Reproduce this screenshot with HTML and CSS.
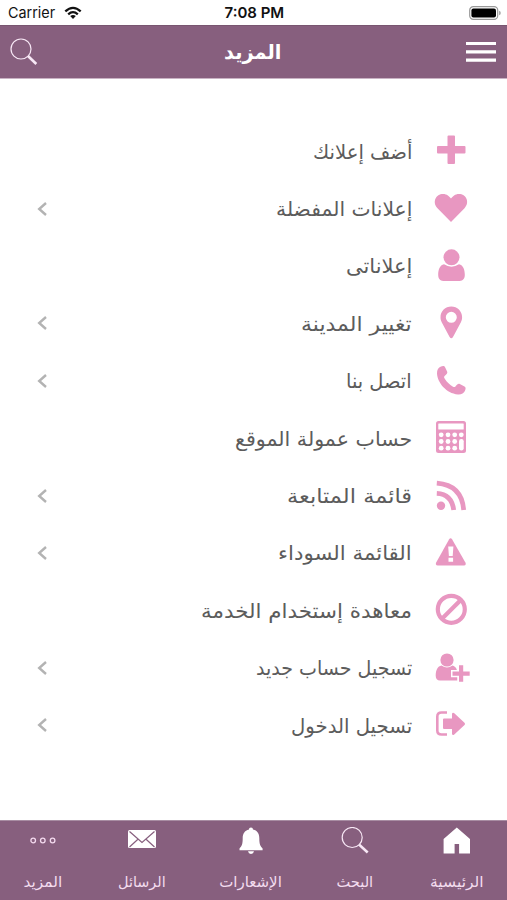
FILE: index.html
```html
<!DOCTYPE html>
<html lang="ar" dir="rtl">
<head>
<meta charset="utf-8">
<title>المزيد</title>
<link rel="stylesheet" href="styles.css">
</head>
<body>
<div class="status" dir="ltr">
  <div class="carrier"><span class="fit" data-w="47">Carrier</span>
    <svg width="18" height="14" viewBox="0 0 18 14"><g fill="none" stroke="#111" stroke-width="2.3"><path d="M1.3 5.3Q9-1.6 16.7 5.3M4.2 8.3Q9 4 13.8 8.3"/></g><path d="M6.2 10.1Q9 7.8 11.8 10.1L9 13z" fill="#111"/></svg>
  </div>
  <div class="time"><span class="fit" data-w="60">7:08 PM</span></div>
  <svg class="battery" width="32" height="14" viewBox="0 0 32 14"><rect x=".7" y=".7" width="28" height="12.6" rx="3.6" fill="#fff" stroke="#999" stroke-width="1.2"/><rect x="2.4" y="2.4" width="24.6" height="9.2" rx="2" fill="#000"/><path d="M30.2 4.8q1.5.5 1.5 2.2t-1.5 2.2z" fill="#999"/></svg>
</div>
<header class="bar" dir="ltr">
  <svg width="28" height="28" viewBox="0 0 28 28" fill="none" stroke="#f8e8f6"><circle cx="11" cy="11" r="10" stroke-width="1.2"/><path d="M18 18l8.300 8" stroke-width="2.600"/></svg>
  <h1><span class="fit" data-w="57">المزيد</span></h1>
  <svg width="30" height="22" viewBox="0 0 30 22"><path d="M0 2.500h30M0 10.800h30M0 19.200h30" stroke="#fff" stroke-width="3.200"/></svg>
</header>
<main class="menu">
  <a class="row"><svg class="icon" viewBox="0 0 36 36"><path d="M15.500 3.500h5.500q1 0 1 1V14h9.500q1 0 1 1v5.500q0 1-1 1H22V31q0 1-1 1h-5.500q-1 0-1-1v-9.500H5q-1 0-1-1V15q0-1 1-1h9.500V4.500q0-1 1-1z"/></svg><span class="label"><span class="fit" data-w="99">أضف إعلانك</span></span></a>
  <a class="row"><svg class="icon" viewBox="0 0 36 36"><path d="M18 32L4.500 18.300C-1.200 12 3 4 10 4c4 0 6.300 2.300 8 4.600C19.700 6.300 22 4 26 4c7 0 11.200 8 5.500 14.300z"/></svg><span class="label"><span class="fit" data-w="136">إعلانات المفضلة</span></span><svg class="go" viewBox="0 0 12 16"><path d="M10 2L3.200 8l6.800 6"/></svg></a>
  <a class="row"><svg class="icon" viewBox="0 0 36 36"><circle cx="18.500" cy="10.300" r="8"/><path d="M11 17.300q7.500 4.700 15 0c4.300 1 5.800 5.500 5.800 10.500 0 4-2 6.200-5 6.200H10.200c-3 0-5-2.200-5-6.200 0-5 1.500-9.500 5.800-10.500z"/></svg><span class="label"><span class="fit" data-w="66">إعلاناتى</span></span></a>
  <a class="row"><svg class="icon" viewBox="0 0 36 36"><path fill-rule="evenodd" d="M18.300 2.500c6 0 10.800 4.700 10.800 10.700 0 2-.5 3.500-1.200 5L20 33q-1.700 2.500-3.400 0L8.700 18.200c-.7-1.500-1.200-3-1.200-5C7.500 7.200 12.300 2.500 18.300 2.500zm0 5.300a5.500 5.500 0 1 0 0 11 5.500 5.500 0 0 0 0-11z"/></svg><span class="label"><span class="fit" data-w="111">تغيير المدينة</span></span><svg class="go" viewBox="0 0 12 16"><path d="M10 2L3.200 8l6.800 6"/></svg></a>
  <a class="row"><svg class="icon" viewBox="0 0 36 36"><path d="M8 4.500c2-.9 3.500-.6 4.200 1l2 4.300c.5 1.500-.5 2.700-2.600 4.200-1 .8-.4 2 .5 3.300 2 3 4.500 5.500 7.500 7.200 1.200.7 2.300 1 3-.2 1.500-2 2.600-3 4.200-2.300l4.700 2.500c1.400.8 1.400 2 .5 4.300-1 2.500-4 4-7 3.700C13 31.300 4.500 20.500 4 11.500 3.900 8 5.300 5.600 8 4.500z"/></svg><span class="label"><span class="fit" data-w="66">اتصل بنا</span></span><svg class="go" viewBox="0 0 12 16"><path d="M10 2L3.200 8l6.800 6"/></svg></a>
  <a class="row"><svg class="icon" viewBox="0 0 36 36"><rect x="3" y="2" width="30" height="32" rx="2.500"/><g class="cut"><rect x="5.300" y="4.500" width="25.400" height="6" rx=".5"/><circle cx="8.200" cy="15.800" r="2.400"/><circle cx="15" cy="15.800" r="2.400"/><circle cx="21.700" cy="15.800" r="2.400"/><circle cx="28.300" cy="15.800" r="2.400"/><circle cx="8.200" cy="22.500" r="2.400"/><circle cx="15" cy="22.500" r="2.400"/><circle cx="21.700" cy="22.500" r="2.400"/><circle cx="8.200" cy="29.200" r="2.400"/><circle cx="15" cy="29.200" r="2.400"/><circle cx="21.700" cy="29.200" r="2.400"/><rect x="26" y="20" width="4.700" height="11.600" rx="2.300"/></g></svg><span class="label"><span class="fit" data-w="177">حساب عمولة الموقع</span></span></a>
  <a class="row"><svg class="icon" viewBox="0 0 36 36"><circle cx="8" cy="28.800" r="4.200"/><path class="line" d="M3.800 16.300Q18.700 17 20.700 33M3.800 6.200Q28.700 8 30.700 33"/></svg><span class="label"><span class="fit" data-w="125">قائمة المتابعة</span></span><svg class="go" viewBox="0 0 12 16"><path d="M10 2L3.200 8l6.800 6"/></svg></a>
  <a class="row"><svg class="icon" viewBox="0 0 36 36"><path d="M16 5.500q1.600-2.500 3.200 0l13.200 23q1.200 2.500-1.400 3H4.700Q2 31 3.200 28.500z"/><path class="cut" d="M15.200 12.500h5.200l-.7 9.500h-3.800zM15.500 23.800h4.600v4h-4.600z"/></svg><span class="label"><span class="fit" data-w="134">القائمة السوداء</span></span><svg class="go" viewBox="0 0 12 16"><path d="M10 2L3.200 8l6.800 6"/></svg></a>
  <a class="row"><svg class="icon" viewBox="0 0 36 36"><path d="M8.700 28L28 8.700" class="ban"/><circle cx="18.300" cy="18.300" r="13.500" class="ban"/></svg><span class="label"><span class="fit" data-w="211">معاهدة إستخدام الخدمة</span></span></a>
  <a class="row"><svg class="icon" viewBox="0 0 36 36"><circle cx="14" cy="11" r="6.600"/><path d="M8.500 16.600q5.500 3.700 11 0c3.500 1 5 4 5 9v6H7c-2.800 0-4.300-2-4.300-4.800 0-5.700 2-9.500 5.800-10.200z"/><path class="plus" d="M26 16.200h4.200v6.400h6.500v4.200h-6.500v5.900H26v-5.900h-6.500v-4.200H26z"/></svg><span class="label"><span class="fit" data-w="156">تسجيل حساب جديد</span></span><svg class="go" viewBox="0 0 12 16"><path d="M10 2L3.200 8l6.800 6"/></svg></a>
  <a class="row"><svg class="icon" viewBox="0 0 36 36"><path class="thin" d="M14 6.500H8.500Q4.300 6.500 4.300 10.500v14q0 4 4.200 4H14"/><path d="M11 12.500h8V8q.3-2 2-1l10.500 9.700q1.200 1.200 0 2.400L21 28.700q-1.700 1-2-1V23h-8q-1 0-1-1v-8.500q0-1 1-1z"/></svg><span class="label"><span class="fit" data-w="121">تسجيل الدخول</span></span><svg class="go" viewBox="0 0 12 16"><path d="M10 2L3.200 8l6.800 6"/></svg></a>
</main>
<nav class="tabs" dir="ltr">
  <a class="tab"><svg width="28" height="28" viewBox="0 0 28 28" fill="none" stroke="#f3d9ee" stroke-width="1.300"><circle cx="4.200" cy="13.500" r="2.300"/><circle cx="13.800" cy="13.500" r="2.300"/><circle cx="23.600" cy="13.500" r="2.300"/></svg><span class="fit mid" data-w="39">المزيد</span></a>
  <a class="tab"><svg width="28" height="28" viewBox="0 0 28 28"><rect y="3" width="28" height="18" rx="1.500" fill="#fff"/><path d="M1.500 4.500L14 15.500 26.500 4.500M1.500 20l8.700-8M26.500 20l-8.700-8" fill="none" stroke="#875f7e" stroke-width="1.200"/></svg><span class="fit mid" data-w="48">الرسائل</span></a>
  <a class="tab"><svg width="28" height="28" viewBox="0 0 28 28" fill="#fff"><path d="M14 .5q2 0 2 2c4.500 1 6.300 4.500 6.300 8.500 0 6.500 1 8 3.300 10.500v1.700H2.500v-1.700C4.800 19 5.700 17.500 5.700 11c0-4 1.800-7.500 6.300-8.500 0-1.300.7-2 2-2zM11 24.300h6q-.5 2.600-3 2.600t-3-2.600z"/></svg><span class="fit mid" data-w="63">الإشعارات</span></a>
  <a class="tab"><svg width="28" height="28" viewBox="0 0 28 28" fill="none" stroke="#f8e8f6"><circle cx="11.200" cy="10.500" r="10" stroke-width="1.200"/><path d="M18 17.500l8.700 8" stroke-width="2.500"/></svg><span class="fit mid" data-w="37">البحث</span></a>
  <a class="tab"><svg width="28" height="28" viewBox="0 0 28 28" fill="#fff"><path d="M13.800.5L27 12v14.500H16.100V17h-4.500v9.500H.6V12z"/></svg><span class="fit mid" data-w="54">الرئيسية</span></a>
</nav>
<script src="fit.js"></script>
</body>
</html>
```
FILE: styles.css
```css
* { box-sizing: border-box; }
body { margin: 0; width: 507px; height: 900px; overflow: hidden; display: flex; flex-direction: column; background: #fff; font-family: "DejaVu Sans", sans-serif; }
svg { display: block; flex: none; }
.fit { display: inline-block; white-space: nowrap; transform-origin: right center; }
.fit.mid { transform-origin: center; }
.status { height: 25px; flex: none; display: grid; grid-template-columns: 1fr auto 1fr; align-items: center; padding: 1px 6px 0 8px; font: 15px/24px Inter, sans-serif; color: #111; }
.status .fit { transform-origin: left center; }
.carrier { display: flex; align-items: center; gap: 7px; }
.time { font-weight: 600; width: 60px; }
.battery { justify-self: end; }
.bar { height: 54px; flex: none; display: flex; align-items: center; justify-content: space-between; padding: 0 11px 0 10px; background: #875f7e; border-top: 1px solid #785570; border-bottom: 1px solid #c9b3c4; color: #fff; }
.bar h1 { margin: 0; font-size: 20px; line-height: 30px; font-weight: 700; }
.menu { flex: 1; padding: 44px 38px 0 36px; }
.row { height: 57.4px; display: flex; align-items: center; color: #5c5c5c; font-size: 20px; }
.icon { width: 36px; height: 36px; fill: #e897c1; overflow: visible; margin-bottom: 3px; }
.icon .cut { fill: #fff; }
.icon .line, .icon .ban, .icon .thin { fill: none; stroke: #e897c1; stroke-width: 4.8; }
.icon .ban { stroke-width: 4.2; }
.icon .thin { stroke-width: 2.6; }
.icon .plus { stroke: #fff; stroke-width: 3; paint-order: stroke; }
.label { flex: 1; margin-right: 21px; line-height: 32px; }
.go { width: 12px; height: 16px; margin-bottom: 1px; fill: none; stroke: #b3b3b3; stroke-width: 2.4; }
.tabs { height: 80px; flex: none; display: grid; grid-template-columns: 85px 113px 105px 103px 101px; background: #875f7e; border-top: 1px solid #a88da3; color: #f3dcef; font-size: 15px; }
.tab { display: flex; flex-direction: column; align-items: center; padding-top: 6px; gap: 15px; line-height: 24px; min-width: 0; }
```
FILE: fit.js
```js
// Narrow or widen each label to its design width.
document.fonts.ready.then(() => {
  document.querySelectorAll('.fit').forEach((el) => {
    el.style.transform = `scaleX(${el.dataset.w / el.offsetWidth})`;
  });
});
```
